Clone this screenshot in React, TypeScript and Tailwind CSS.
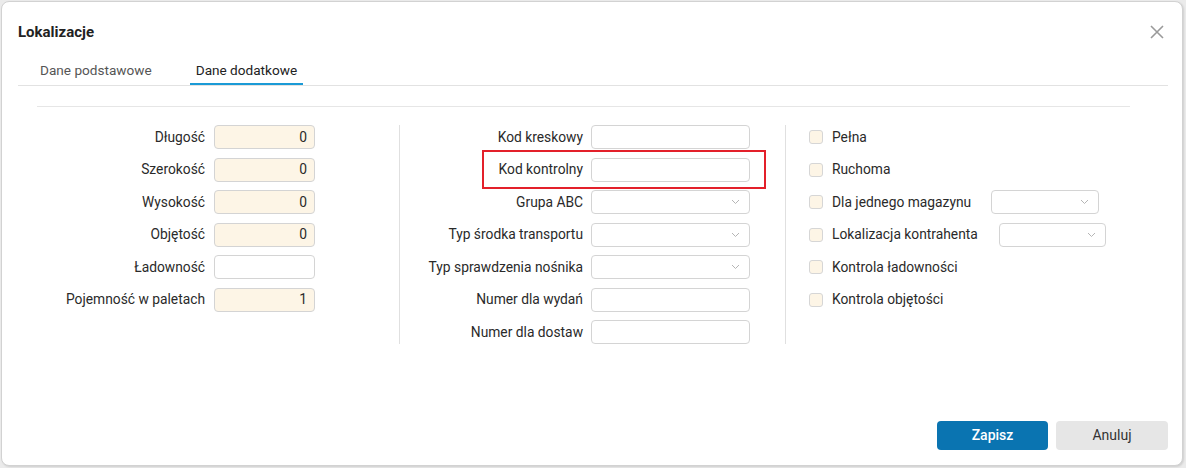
import React from "react";

const font = { fontFamily: "Roboto, 'Noto Sans', 'Liberation Sans', sans-serif" };

function Chevron() {
  return (
    <svg width="9" height="6" viewBox="0 0 9 6" className="absolute right-[9px] top-1/2 -translate-y-1/2">
      <path d="M1 1 L4.5 4.5 L8 1" fill="none" stroke="#b5b5b5" strokeWidth="1" />
    </svg>
  );
}

function TextInput({ value, cream, w }: { value?: string; cream?: boolean; w: string }) {
  return (
    <div
      className={`${w} h-[24px] rounded-[4px] border border-[#d4d4d4] flex items-center justify-end pr-[7px] text-[13.8px] text-[#2a2a2a] ${
        cream ? "bg-[#fdf5e6]" : "bg-white"
      }`}
    >
      {value}
    </div>
  );
}

function Select({ w }: { w: string }) {
  return <div className={`${w} relative h-[24px] rounded-[4px] border border-[#d4d4d4] bg-white`}><Chevron /></div>;
}

function Checkbox({ label, children }: { label: string; children?: React.ReactNode }) {
  return (
    <div className="h-[24px] flex items-center">
      <div className="w-[14px] h-[14px] rounded-[3px] border border-[#d6d6d6] bg-[#fdf5e6]" />
      <span className="ml-[9px] text-[13.8px] text-[#2a2a2a]">{label}</span>
      {children}
    </div>
  );
}

export default function App() {
  const left: [string, string | undefined, boolean][] = [
    ["Długość", "0", true],
    ["Szerokość", "0", true],
    ["Wysokość", "0", true],
    ["Objętość", "0", true],
    ["Ładowność", undefined, false],
    ["Pojemność w paletach", "1", true],
  ];
  return (
    <div className="w-[1186px] h-[468px] bg-[#ebebeb] pt-[1px] pl-[1px]" style={font}>
      <div className="w-[1182px] h-[465px] bg-white rounded-[8px] border border-[#d2d2d2] shadow-[1px_1px_2px_rgba(0,0,0,0.12)] flex flex-col">
        <div className="flex items-center justify-between pt-[20px] pl-[16px] pr-[17px]">
          <span className="text-[15px] leading-[20px] font-bold text-[#222]">Lokalizacje</span>
          <svg width="16" height="16" viewBox="0 0 16 16">
            <path d="M2 2 L14 14 M14 2 L2 14" stroke="#9a9a9a" strokeWidth="1.6" fill="none" />
          </svg>
        </div>

        <div className="ml-[16px] mt-[14px] w-[1150px] h-[30px] border-b border-[#e2e2e2] flex gap-[32px] pl-[16px]">
          <div className="relative h-[29px] px-[6px] flex items-center text-[13.6px] text-[#555]">Dane podstawowe</div>
          <div className="relative h-[29px] px-[6px] flex items-center text-[13.6px] text-[#222]">
            Dane dodatkowe
            <div className="absolute left-0 right-0 bottom-0 h-[2px] bg-[#1a9ad6]" />
          </div>
        </div>

        <div className="ml-[35px] mt-[20px] w-[1093px] border-t border-[#e6e6e6]" />

        <div className="ml-[35px] mt-[18px] flex">
          <div className="w-[362px] flex flex-col gap-[8.5px]">
            {left.map(([l, v, c]) => (
              <div key={l} className="flex items-center h-[24px]">
                <span className="w-[168px] text-right text-[13.8px] text-[#2a2a2a]">{l}</span>
                <div className="ml-[9px]">
                  <TextInput value={v} cream={c} w="w-[101px]" />
                </div>
              </div>
            ))}
          </div>

          <div className="w-px bg-[#e0e0e0]" />

          <div className="w-[385px] flex flex-col gap-[8.5px]">
            {[
              ["Kod kreskowy", "input"],
              ["Kod kontrolny", "input"],
              ["Grupa ABC", "select"],
              ["Typ środka transportu", "select"],
              ["Typ sprawdzenia nośnika", "select"],
              ["Numer dla wydań", "input"],
              ["Numer dla dostaw", "input"],
            ].map(([l, t]) => (
              <div key={l} className="relative flex items-center h-[24px]">
                <span className="w-[183px] text-right text-[13.8px] text-[#2a2a2a]">{l}</span>
                <div className="ml-[8px]">
                  {t === "input" ? <TextInput w="w-[159px]" /> : <Select w="w-[159px]" />}
                </div>
                {l === "Kod kontrolny" && (
                  <div className="absolute left-[82px] top-[-8px] w-[284px] h-[39px] border-2 border-[#e3202a]" />
                )}
              </div>
            ))}
          </div>

          <div className="w-px bg-[#e0e0e0]" />

          <div className="pl-[23px] flex flex-col gap-[8.5px]">
            <Checkbox label="Pełna" />
            <Checkbox label="Ruchoma" />
            <Checkbox label="Dla jednego magazynu">
              <div className="ml-[20px]">
                <Select w="w-[108px]" />
              </div>
            </Checkbox>
            <Checkbox label="Lokalizacja kontrahenta">
              <div className="ml-[21px]">
                <Select w="w-[107px]" />
              </div>
            </Checkbox>
            <Checkbox label="Kontrola ładowności" />
            <Checkbox label="Kontrola objętości" />
          </div>
        </div>

        <div className="flex-1" />

        <div className="flex justify-end gap-[8px] pr-[14px] pb-[15px]">
          <button className="w-[111px] h-[29px] rounded-[4px] bg-[#0a74b1] text-white text-[14px] font-medium">Zapisz</button>
          <button className="w-[112px] h-[29px] rounded-[4px] bg-[#e6e6e6] text-[#333] text-[14px]">Anuluj</button>
        </div>
      </div>
    </div>
  );
}
